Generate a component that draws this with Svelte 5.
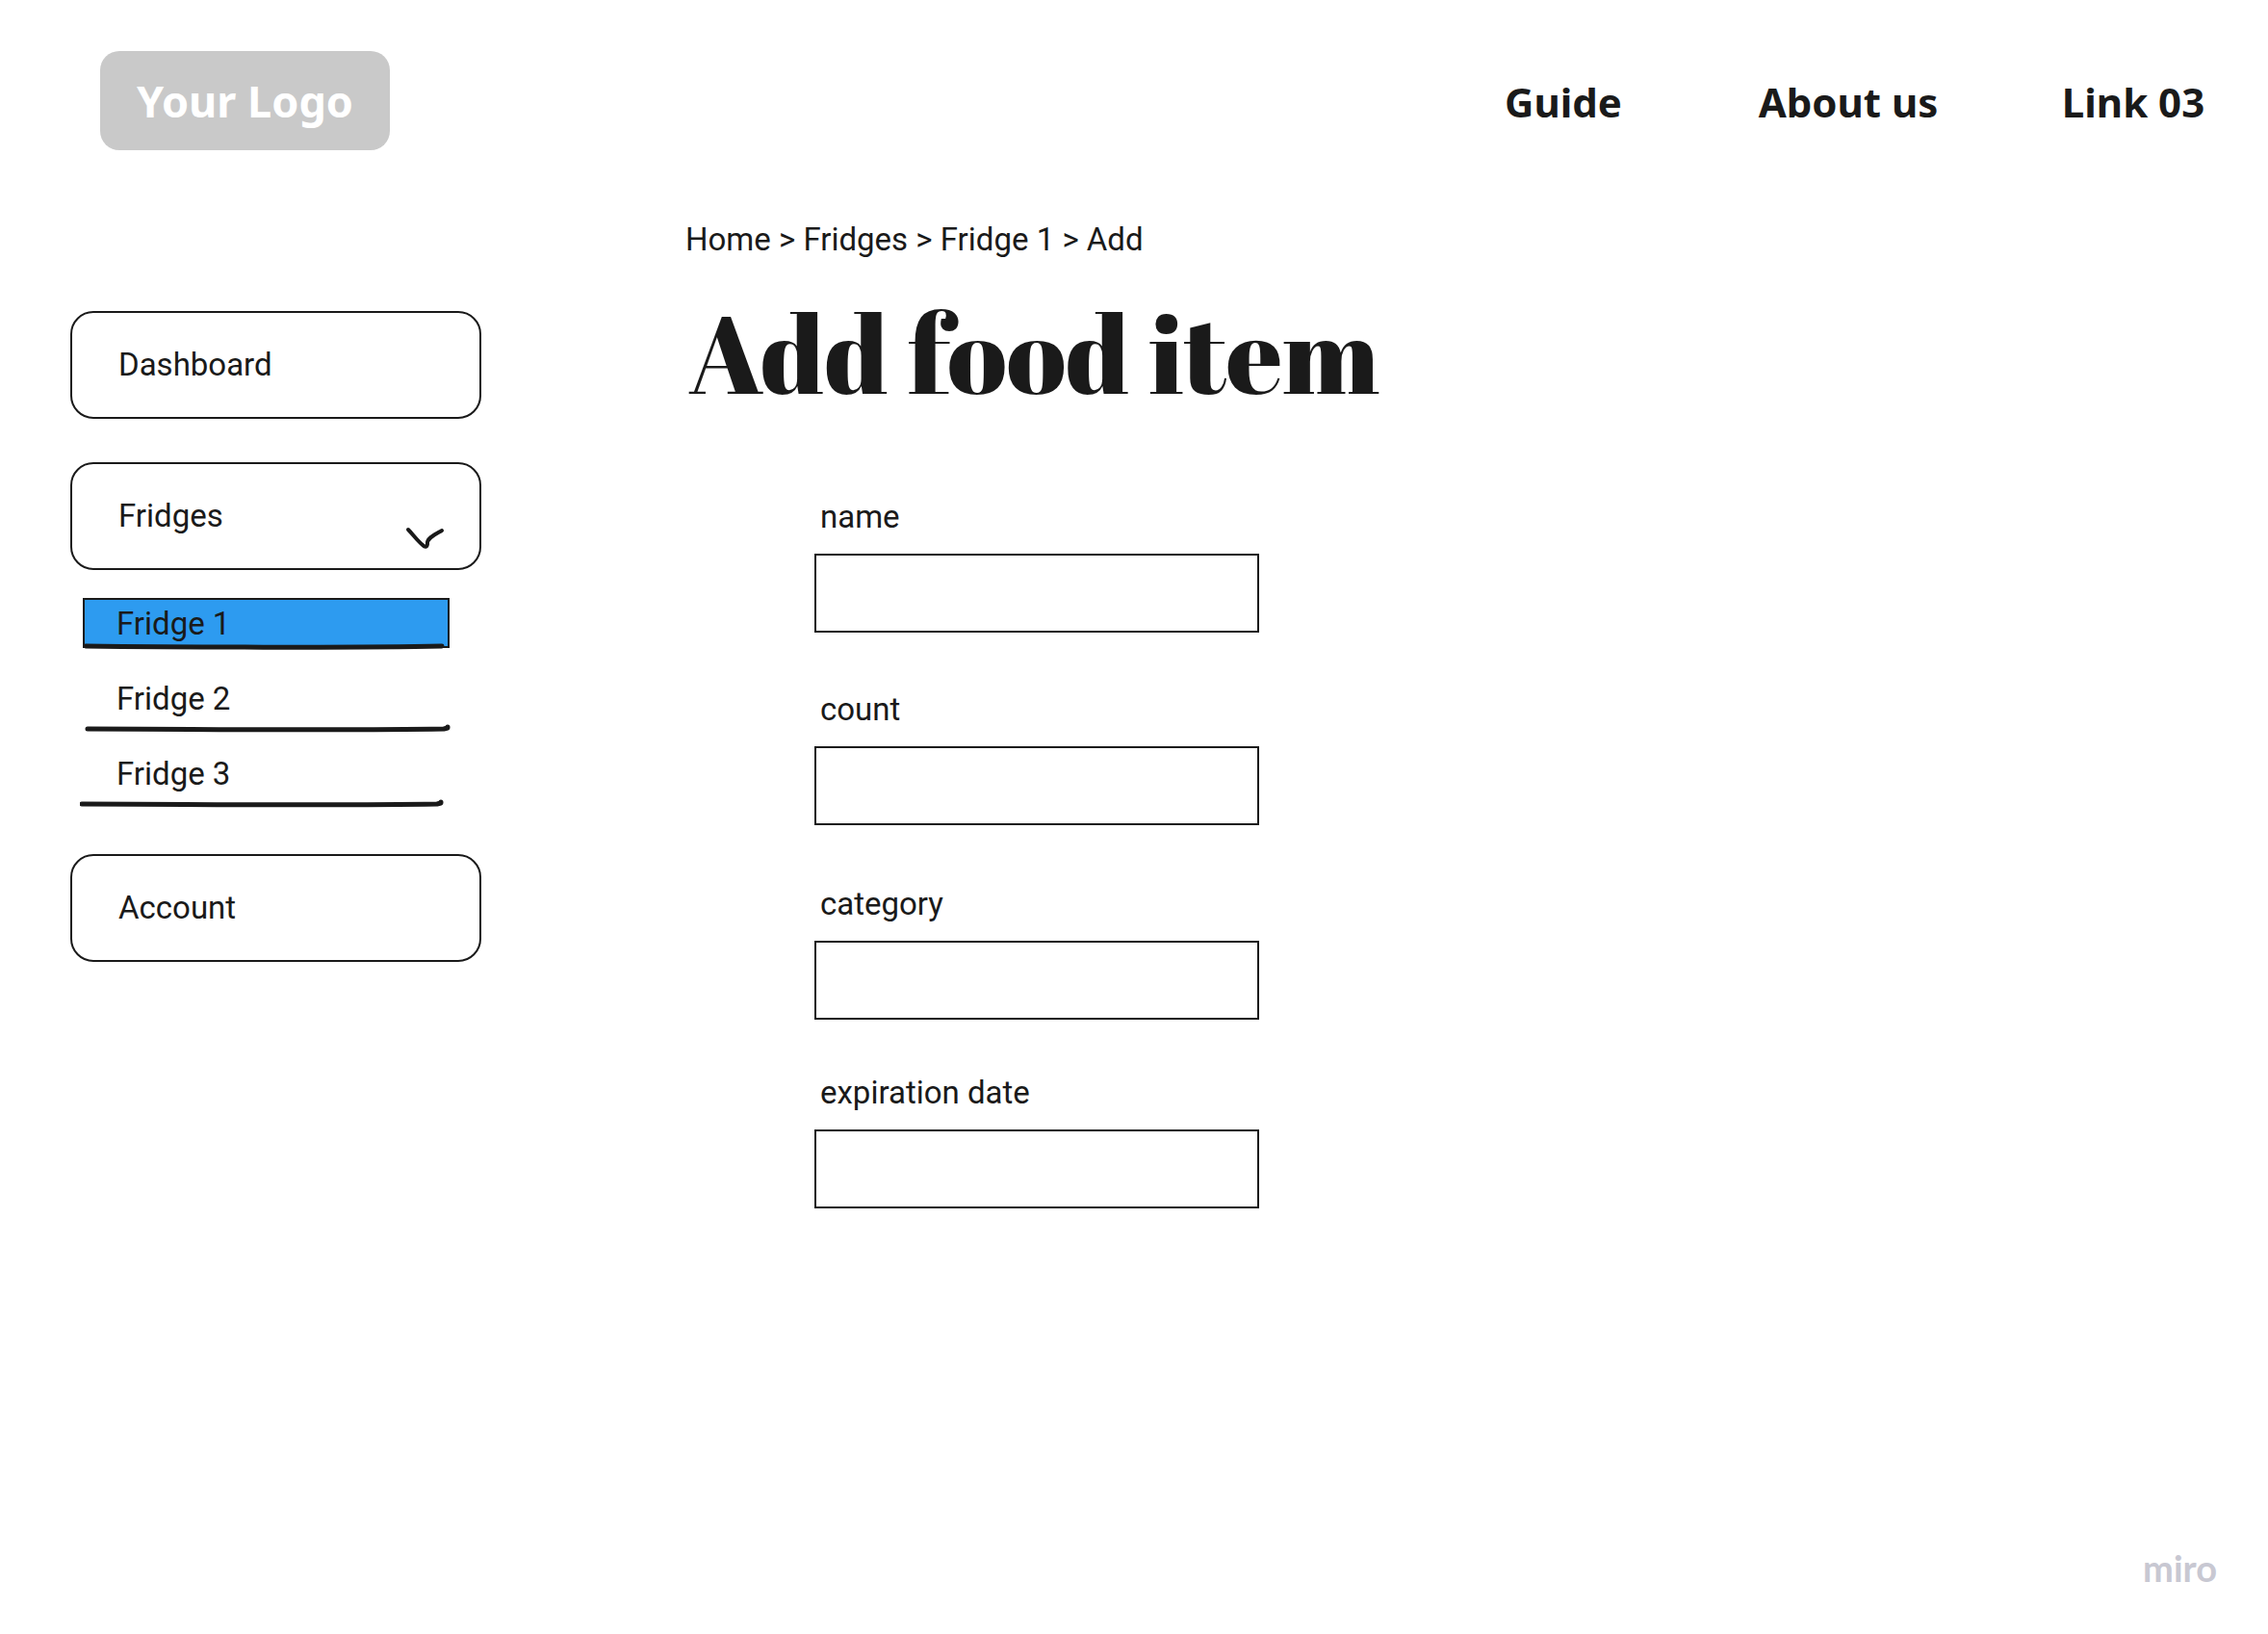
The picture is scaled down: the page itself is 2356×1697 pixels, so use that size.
<script>
  const links = ['Guide', 'About us', 'Link 03'];
  const crumbs = ['Home', 'Fridges', 'Fridge 1'];
  const fridges = [
    { name: 'Fridge 1', active: true, line: 'M6 4C90 5 290 6 376 4' },
    { name: 'Fridge 2', line: 'M8 5C110 5 260 7 378 5L382 4L382 3' },
    { name: 'Fridge 3', line: 'M2 5C104 5 254 7 371 5L375 4L375 3' },
  ];
  const fields = [
    { id: 'name', label: 'name' },
    { id: 'count', label: 'count' },
    { id: 'category', label: 'category' },
    { id: 'expiration', label: 'expiration date' },
  ];

  let open = $state(true);
</script>

<div class="page">
  <header>
    <a class="logo" href="#home">Your Logo</a>
    <nav class="top" aria-label="Main">
      {#each links as link}
        <a href="#top">{link}</a>
      {/each}
    </nav>
  </header>

  <div class="body">
    <nav class="side" aria-label="Sections">
      <a class="box" href="#dashboard">Dashboard</a>
      <button class="box" type="button" aria-expanded={open} onclick={() => (open = !open)}>
        Fridges
        <svg class="chevron" width="44" height="26" viewBox="0 0 44 26" aria-hidden="true">
          <path d="M3 4C8 9 12 15 18 20Q22 24 23 19C22 13 31 9 38 5" />
        </svg>
      </button>
      {#if open}
        <ul>
          {#each fridges as fridge}
            <li class:active={fridge.active}>
              <a href="#fridge">{fridge.name}</a>
              <svg width="385" height="10" viewBox="0 0 385 10" aria-hidden="true">
                <path d={fridge.line} />
              </svg>
            </li>
          {/each}
        </ul>
      {/if}
      <a class="box" href="#account">Account</a>
    </nav>

    <main>
      <nav class="crumbs" aria-label="Breadcrumb">
        {#each crumbs as crumb}<a href="#crumb">{crumb}</a>{' > '}{/each}<span>Add</span>
      </nav>
      <h1>Add food item</h1>
      <form>
        {#each fields as field}
          <div class="field">
            <label for={field.id}>{field.label}</label>
            <input id={field.id} type="text" />
          </div>
        {/each}
      </form>
    </main>
  </div>

  <footer>miro</footer>
</div>

<style>
  :global(body) {
    margin: 0;
    background: #fff;
  }

  .page {
    box-sizing: border-box;
    min-height: 100vh;
    display: flex;
    flex-direction: column;
    color: #1a1a1a;
    font: 33px/40px Roboto, sans-serif;
  }

  a {
    color: inherit;
    text-decoration: none;
  }

  header {
    display: flex;
    flex-wrap: wrap;
    justify-content: space-between;
    align-items: center;
    gap: 24px;
    padding: 53px 10px 0 104px;
    font-family: 'Noto Sans', sans-serif;
    font-weight: 700;
  }

  .logo {
    padding: 21px 38px;
    border-radius: 20px;
    background: #c9c9c9;
    color: #fff;
    font-size: 45px;
    line-height: 61px;
  }

  .top {
    display: grid;
    grid-template-columns: repeat(3, 260px);
    gap: 36px;
    padding-top: 2px;
    font-size: 42px;
    line-height: 60px;
    text-align: center;
  }

  .body {
    display: flex;
    flex-wrap: wrap;
    gap: 40px 212px;
    padding: 73px 73px 40px;
  }

  .side {
    box-sizing: border-box;
    width: 427px;
    padding-top: 94px;
    display: flex;
    flex-direction: column;
    gap: 45px;
  }

  .box {
    box-sizing: border-box;
    display: flex;
    justify-content: space-between;
    align-items: center;
    width: 100%;
    height: 112px;
    padding: 0 33px 0 48px;
    border: 2px solid #1a1a1a;
    border-radius: 24px;
    background: none;
    color: inherit;
    font: inherit;
    cursor: pointer;
  }

  .chevron {
    align-self: flex-end;
    margin-bottom: 18px;
  }

  svg path {
    fill: none;
    stroke: #1a1a1a;
    stroke-width: 5;
    stroke-linecap: round;
    stroke-linejoin: round;
  }

  .chevron path {
    stroke-width: 4;
  }

  ul {
    display: flex;
    flex-direction: column;
    gap: 22px;
    list-style: none;
    margin: -16px 0 2px;
    padding: 0 33px 0 10px;
  }

  li {
    position: relative;
    display: flex;
    flex-direction: column;
    gap: 6px;
  }

  li a {
    padding-left: 38px;
  }

  .active {
    margin-bottom: 11px;
  }

  .active a {
    margin-left: 3px;
    padding: 5px 0 3px 33px;
    border: 2px solid #1a1a1a;
    background: #2d9bf0;
  }

  .active svg {
    position: absolute;
    left: 0;
    bottom: -4px;
  }

  main {
    flex: 1;
    min-width: 464px;
  }

  h1 {
    margin: 37px 0 0 3px;
    font: 400 113px/120px 'Abril Fatface', 'Liberation Serif', serif;
  }

  form {
    display: grid;
    grid-template-rows: 200px 202px 196px auto;
    margin: 91px 0 0 134px;
  }

  .field {
    display: flex;
    flex-direction: column;
    align-items: flex-start;
    gap: 18px;
  }

  label {
    padding-left: 6px;
  }

  input {
    box-sizing: border-box;
    width: 462px;
    max-width: 100%;
    height: 82px;
    padding: 0 16px;
    border: 2px solid #1a1a1a;
    border-radius: 0;
    background: #fff;
    color: inherit;
    font: inherit;
  }

  footer {
    margin-top: auto;
    padding: 0 53px 49px;
    text-align: right;
    color: #c8c8d2;
    font: 700 38px/40px Lato, sans-serif;
  }
</style>
